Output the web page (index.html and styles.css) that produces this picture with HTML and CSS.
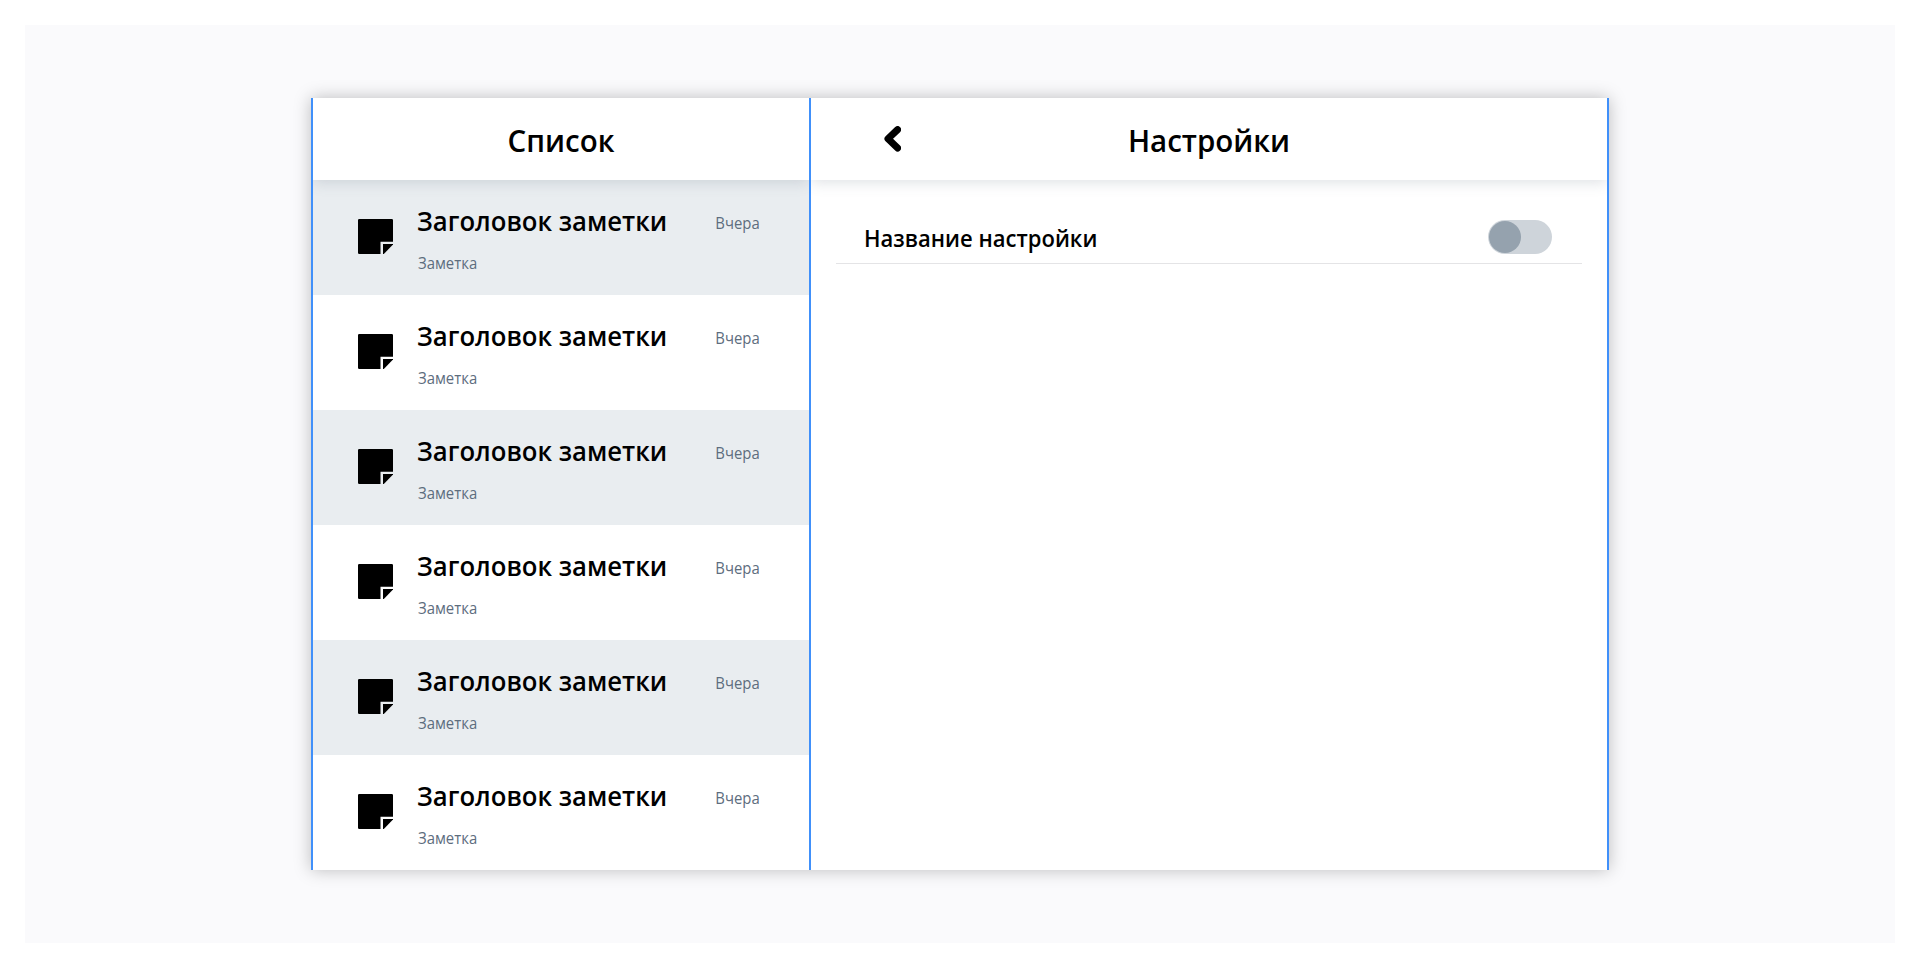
FILE: index.html
```html
<!DOCTYPE html>
<html lang="ru">
<head>
<meta charset="utf-8">
<title>Настройки</title>
<link rel="stylesheet" href="styles.css">
</head>
<body>
<svg width="0" height="0" class="sprite" aria-hidden="true">
  <symbol id="note" viewBox="0 0 35 35">
    <path d="M1.2 0H33.8Q35 0 35 1.2V22.7H22.5V35H1.2Q0 35 0 33.8V1.2Q0 0 1.2 0Z"/>
    <path d="M25 25H35V25.6L25.8 35H25Z"/>
  </symbol>
</svg>
<main class="stage">
  <div class="window">
    <section class="list">
      <header class="header"><h1 class="heading">Список</h1></header>
      <ul class="notes">
        <li class="note"><svg class="note-icon"><use href="#note"/></svg><div class="note-body"><h2 class="note-title">Заголовок заметки</h2><p class="note-text">Заметка</p></div><time class="note-date">Вчера</time></li>
        <li class="note"><svg class="note-icon"><use href="#note"/></svg><div class="note-body"><h2 class="note-title">Заголовок заметки</h2><p class="note-text">Заметка</p></div><time class="note-date">Вчера</time></li>
        <li class="note"><svg class="note-icon"><use href="#note"/></svg><div class="note-body"><h2 class="note-title">Заголовок заметки</h2><p class="note-text">Заметка</p></div><time class="note-date">Вчера</time></li>
        <li class="note"><svg class="note-icon"><use href="#note"/></svg><div class="note-body"><h2 class="note-title">Заголовок заметки</h2><p class="note-text">Заметка</p></div><time class="note-date">Вчера</time></li>
        <li class="note"><svg class="note-icon"><use href="#note"/></svg><div class="note-body"><h2 class="note-title">Заголовок заметки</h2><p class="note-text">Заметка</p></div><time class="note-date">Вчера</time></li>
        <li class="note"><svg class="note-icon"><use href="#note"/></svg><div class="note-body"><h2 class="note-title">Заголовок заметки</h2><p class="note-text">Заметка</p></div><time class="note-date">Вчера</time></li>
      </ul>
    </section>
    <section class="settings">
      <header class="header header-settings">
        <svg class="back" viewBox="0 0 17 26"><path d="M13.6 3.6 4 12.8 13.6 22.1"/></svg>
        <h1 class="heading">Настройки</h1>
      </header>
      <div class="setting">
        <span class="setting-name">Название настройки</span>
        <span class="toggle"><span class="knob"></span></span>
      </div>
    </section>
  </div>
</main>
</body>
</html>
```
FILE: styles.css
```css
* { box-sizing: border-box; margin: 0; padding: 0; }
html { background: #fff; }
body { padding: 25px; background: #fff; color: #000; font-family: "Open Sans", "Noto Sans", sans-serif; }
.sprite { display: block; }
.stage { height: 918px; padding-top: 73px; background: #fafafc; }
.window {
  display: flex;
  width: 1298px;
  height: 772px;
  margin: 0 auto;
  background: #fff;
  border: solid #4090fa;
  border-width: 0 2px;
  box-shadow: 0 0 16px rgba(0, 0, 0, .25);
}
.list { width: 498px; border-right: 2px solid #4090fa; overflow: hidden; }
.settings { flex: 1; overflow: hidden; }
.header {
  position: relative;
  height: 82px;
  background: #fff;
  box-shadow: 0 2px 14px rgba(82, 97, 115, .2);
}
.heading { font-size: 31.4px; line-height: 84px; font-weight: 600; text-align: center; transform: scaleX(.94); }
.header-settings { display: grid; grid-template-columns: 91px 1fr 91px; }
.back { width: 17px; height: 26px; margin: 28px 0 0 73px; fill: none; stroke: #000; stroke-width: 7; stroke-linecap: round; stroke-linejoin: round; }
.notes { list-style: none; }
.note { display: flex; height: 115px; padding: 0 49px 0 45px; }
.note:nth-child(odd) { background: #e9edf0; }
.note-icon { width: 35px; height: 35px; margin-top: 39.3px; }
.note-body { flex: 1; padding: 22px 0 0 24px; }
.note-title { font-size: 27.5px; line-height: 38px; font-weight: 600; white-space: nowrap; transform: scaleX(.934); transform-origin: left; }
.note-text { margin: 12px 0 0 1px; transform-origin: left; }
.note-text, .note-date { font-size: 16px; line-height: 22px; color: #5d6d7e; transform: scaleX(.93); }
.note-date { height: 22px; margin-top: 32px; transform-origin: right; }
.setting {
  display: flex;
  justify-content: space-between;
  height: 84px;
  margin: 0 25px 0 25px;
  padding: 40px 30px 0 28px;
  border-bottom: 1px solid #e4e4e6;
}
.setting-name { font-size: 23.6px; line-height: 37px; font-weight: 600; transform: scaleX(.934); transform-origin: left; }
.toggle { width: 64px; height: 34px; padding: 1px; border-radius: 17px; background: #ced4da; }
.knob { display: block; width: 32px; height: 32px; border-radius: 50%; background: #95a2ae; }
```
